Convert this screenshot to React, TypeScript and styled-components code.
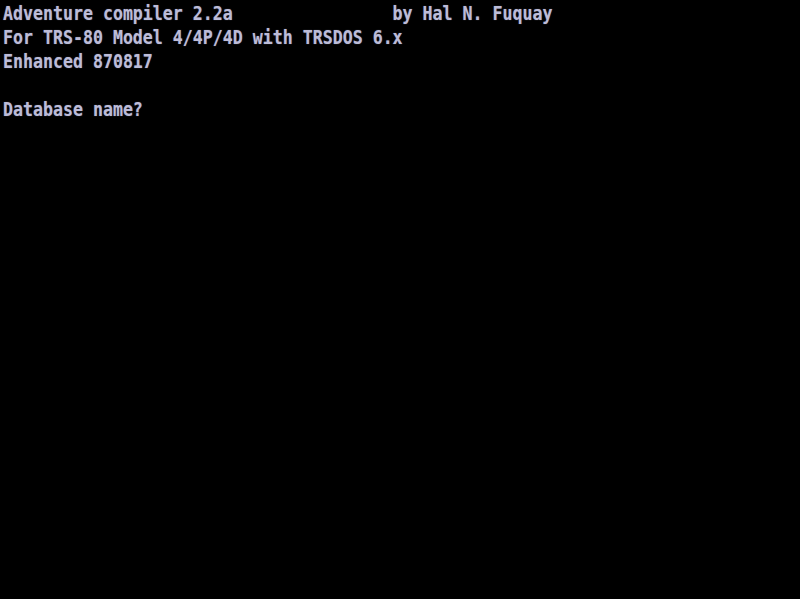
import React from "react";
import styled, { createGlobalStyle } from "styled-components";

const Global = createGlobalStyle`
  html, body { margin: 0; padding: 0; background: #000; }
  #root { width: 800px; height: 599px; overflow: hidden; }
`;

const Screen = styled.div`
  width: 800px;
  height: 599px;
  background: #000;
  padding: 0 0 0 3px;
  box-sizing: border-box;
  display: flex;
  flex-direction: column;
`;

const Line = styled.div`
  height: 24px;
  font-family: "DejaVu Sans Mono", "Liberation Mono", monospace;
  font-size: 16.6px;
  font-weight: bold;
  line-height: 24px;
  white-space: pre;
  color: #bcbcd8;
  text-shadow: 0 0 1px rgba(180, 180, 220, 0.5);
  transform: scaleY(1.18);
  transform-origin: 0 0;
`;

const lines = [
  "Adventure compiler 2.2a                by Hal N. Fuquay",
  "For TRS-80 Model 4/4P/4D with TRSDOS 6.x",
  "Enhanced 870817",
  "",
  "Database name?",
];

export default function App() {
  return (
    <>
      <Global />
      <Screen>
        {lines.map((l, i) => (
          <Line key={i}>{l}</Line>
        ))}
      </Screen>
    </>
  );
}
